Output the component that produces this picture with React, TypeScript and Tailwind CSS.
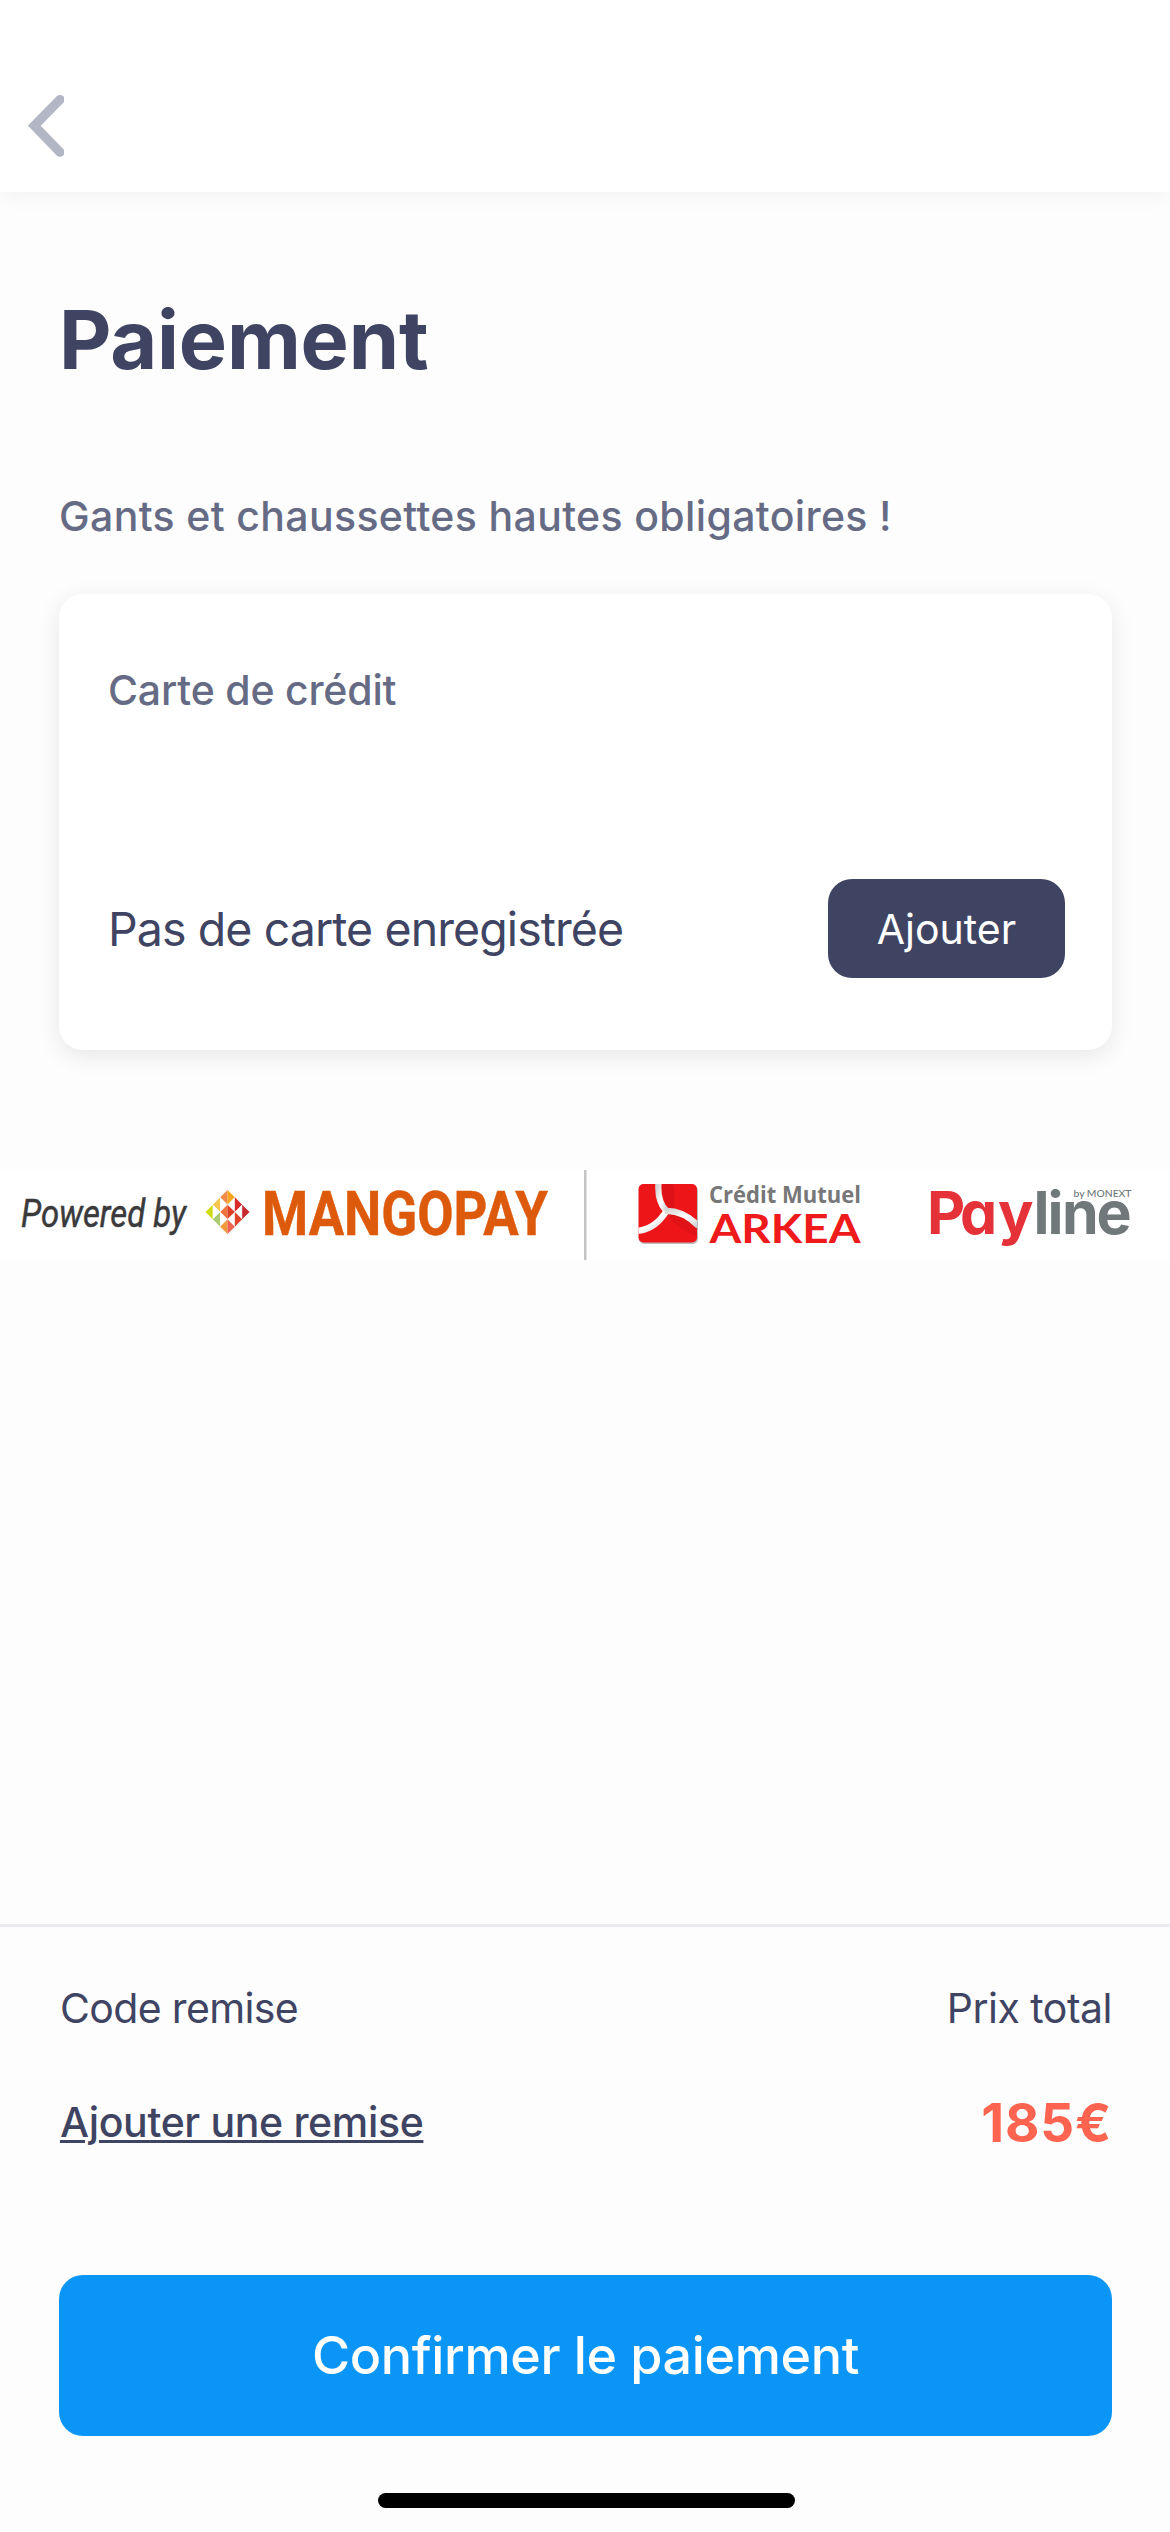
interface LogoTextProps {
  x: number;
  y: number;
  width: number;
  size: number;
  className: string;
  children: string;
}

function LogoText({ x, y, width, size, className, children }: LogoTextProps) {
  return (
    <text x={x} y={y} fontSize={size} textLength={width} lengthAdjust="spacingAndGlyphs" className={className}>
      {children}
    </text>
  );
}

const mangoCells = [
  { x: 22, y: 7.33, left: '#f08b4c', right: '#f9a51e' },
  { x: 14.67, y: 14.67, left: '#f6c650', right: '#ffffff' },
  { x: 29.33, y: 14.67, left: '#ffffff', right: '#d9292b' },
  { x: 7.33, y: 22, left: '#cddb12', right: '#ffffff' },
  { x: 22, y: 22, left: '#ee7440', right: '#dd3f26' },
  { x: 36.67, y: 22, left: '#ffffff', right: '#c9272f' },
  { x: 14.67, y: 29.33, left: '#a9c973', right: '#ffffff' },
  { x: 29.33, y: 29.33, left: '#ffffff', right: '#e04328' },
  { x: 22, y: 36.67, left: '#f39a3e', right: '#ee6450' },
];

function MangoIcon() {
  return (
    <g transform="translate(205.5 21)">
      {mangoCells.map((c) => (
        <g key={`${c.x}-${c.y}`}>
          <path d={`M${c.x} ${c.y - 7.33}v14.66l-7.33-7.33z`} fill={c.left} />
          <path d={`M${c.x} ${c.y - 7.33}v14.66l7.33-7.33z`} fill={c.right} />
        </g>
      ))}
    </g>
  );
}

function ArkeaIcon() {
  return (
    <g transform="translate(638.5 15)">
      <defs>
        <linearGradient id="silver" x1="0" y1="0" x2="1" y2="1">
          <stop offset="0" stopColor="#d4d4d4" />
          <stop offset="0.5" stopColor="#ffffff" />
          <stop offset="1" stopColor="#cfcfcf" />
        </linearGradient>
        <clipPath id="tile">
          <rect width="58.5" height="58.5" rx="5" />
        </clipPath>
      </defs>
      <rect x="0.5" y="1.5" width="59" height="58.5" rx="5" fill="#bdbdbd" />
      <rect width="58.5" height="58.5" rx="5" fill="#ee1518" />
      <g clipPath="url(#tile)">
        <path d="M24 -1C22 12 28 24 34 27C38 20 36 8 34 -1Z" fill="#c91014" opacity="0.45" />
        <path d="M28 28C34 40 44 47 58 52V38C48 28 38 26 28 28Z" fill="#c91014" opacity="0.35" />
        <g fill="none" stroke="url(#silver)" strokeWidth="6.2">
          <path d="M20 -1C19 11 22 21 28 27" />
          <path d="M-1 47C13 45 21 38 28 27" />
          <path d="M26 27C40 26 51 33 60 42" />
        </g>
      </g>
    </g>
  );
}

function PartnerLogos() {
  return (
    <svg width="1170" height="91" viewBox="0 0 1170 91" className="block bg-white">
      <LogoText x={21} y={57.5} width={165} size={38.5} className="fill-[#3a3a3c] stroke-[#3a3a3c] stroke-[0.5px] font-[Roboto] italic">
        Powered by
      </LogoText>
      <MangoIcon />
      <LogoText x={262} y={65.5} width={286} size={62} className="fill-[#dd5a0c] stroke-[#dd5a0c] stroke-[0.5px] font-[Roboto] font-bold">
        MANGOPAY
      </LogoText>
      <rect x="584" y="1" width="2.5" height="90" fill="#c4c4c4" />
      <ArkeaIcon />
      <LogoText x={709} y={34} width={152} size={22.5} className="fill-[#777777] font-['Open_Sans'] font-bold">
        Crédit Mutuel
      </LogoText>
      <LogoText x={709.5} y={73.5} width={151} size={41} className="fill-[#ee1a1c] font-[Lato] font-bold">
        ARKEA
      </LogoText>
      <text x="927 960 998" y="64.5" fontSize="59" className="fill-[#e53238] font-[Inter] font-bold [font-feature-settings:'cv11']">
        Pay
      </text>
      <text x="1033.5 1047.5 1062 1096.5" y="64.5" fontSize="59" className="fill-[#70787a] font-[Inter] font-bold">
        line
      </text>
      <LogoText x={1073.5} y={28} width={58} size={10} className="fill-[#70787a] font-[Lato] font-medium">
        by MONEXT
      </LogoText>
    </svg>
  );
}

function Header() {
  return (
    <header className="relative h-48 shrink-0 bg-white pl-7 pt-[95px] shadow-[0_6px_18px_rgba(0,0,0,0.04)]">
      <button aria-label="Retour" className="block">
        <svg width="36" height="62" viewBox="0 0 36 62" fill="none" stroke="#b3b6c5" strokeWidth="9.2" strokeLinecap="round">
          <path d="M32 4.6L6.3 30.7L32 57.2" />
        </svg>
      </button>
    </header>
  );
}

function CreditCard() {
  return (
    <section className="mx-[59px] mt-[53px] h-[456px] w-[1053px] rounded-3xl bg-white pl-[49px] pr-[47px] pt-[71px] shadow-[0_6px_24px_rgba(0,0,0,0.09)]">
      <h2 className="text-[41px] font-medium leading-[50px] tracking-[-0.2px] text-[#666b85]">Carte de crédit</h2>
      <div className="mt-[164px] flex items-center justify-between">
        <p className="text-[46.5px] leading-[60px] tracking-[-0.92px] text-[#3f4463]">Pas de carte enregistrée</p>
        <button className="h-[99px] w-[237px] rounded-3xl bg-[#3f4463] text-[41px] leading-[50px] text-white">
          Ajouter
        </button>
      </div>
    </section>
  );
}

function Summary() {
  return (
    <footer className="mt-auto border-t-[3px] border-[#ebecef] pl-[60px] pr-[58px] pt-14 text-[#3f4463]">
      <div className="flex justify-between text-[41px] leading-[50px]">
        <span className="tracking-[-0.65px]">Code remise</span>
        <span className="tracking-[-0.5px]">Prix total</span>
      </div>
      <div className="mt-16 flex h-[50px] justify-between leading-[50px]">
        <a className="text-[41px] font-medium tracking-[-0.35px] underline decoration-[3px] underline-offset-[3px]">
          Ajouter une remise
        </a>
        <span className="mt-px text-[53px] font-bold tracking-[0.8px] text-[#fe6450]">185€</span>
      </div>
      <button className="-ml-px mt-32 block h-[161px] w-[1053px] rounded-3xl bg-[#0b96f7] text-[52px] font-medium tracking-[-0.35px] text-white">
        Confirmer le paiement
      </button>
      <div className="mx-auto mb-6 mt-[57px] h-[15px] w-[417px] rounded-full bg-black" />
    </footer>
  );
}

export default function App() {
  return (
    <div className="flex h-[2532px] w-[1170px] flex-col overflow-hidden bg-[#fdfdfd] font-[Inter,sans-serif]">
      <Header />
      <main>
        <h1 className="ml-[59px] mt-[98px] text-[81px] font-bold leading-[100px] tracking-[-0.2px] text-[#3f4463]">
          Paiement
        </h1>
        <p className="ml-[59px] mt-[101px] text-[41px] font-medium leading-[50px] tracking-[0.35px] text-[#666b85]">
          Gants et chaussettes hautes obligatoires !
        </p>
        <CreditCard />
        <div className="mt-[119px]">
          <PartnerLogos />
        </div>
      </main>
      <Summary />
    </div>
  );
}
